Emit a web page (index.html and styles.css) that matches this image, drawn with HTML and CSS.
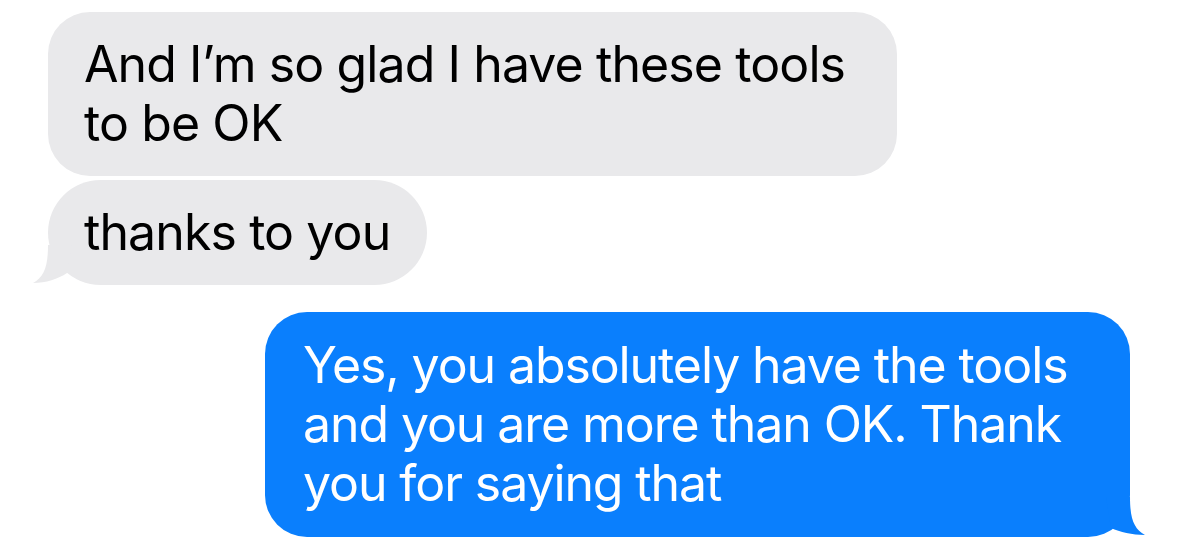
FILE: index.html
```html
<!DOCTYPE html>
<html lang="en">
<head>
  <meta charset="UTF-8" />
  <meta name="viewport" content="width=device-width, initial-scale=1.0"/>
  <title>Messages</title>
  <link rel="stylesheet" href="styles.css">
</head>
<body>
  <div class="thread">
    <div class="bubble received first">
      And I’m so glad I have these tools<br>to be OK
    </div>

    <div class="bubble received last">
      thanks to you
      <svg class="tail tail-left" width="56" height="40" viewBox="0 0 56 40">
        <path d="M16 0 C16 22 12 32 1 38 C14 38 26 34 35 28 L40 0 Z" fill="#e9e9eb"/>
      </svg>
    </div>

    <div class="bubble sent last">
      Yes, you absolutely have the tools<br>and you are more than OK. Thank<br>you for saying that
      <svg class="tail tail-right" width="56" height="40" viewBox="0 0 56 40">
        <path d="M40 0 C40 22 44 32 55 38 C42 38 30 35 21 31 L16 0 Z" fill="#0a7ffd"/>
      </svg>
    </div>
  </div>
</body>
</html>
```

FILE: styles.css
```css
body {
  margin: 0;
  padding: 0;
  background: #ffffff;
  font-family: Inter, 'Noto Sans', sans-serif;
}

.thread {
  display: flex;
  flex-direction: column;
  align-items: flex-start;
  padding: 12px 49px 0 48px;
}

.bubble {
  position: relative;
  box-sizing: border-box;
  font-size: 50px;
  line-height: 59px;
  letter-spacing: -0.9px;
  padding: 23px 36px;
  border-radius: 42px;
  white-space: nowrap;
}

.received {
  background: #e9e9eb;
  color: #000000;
}

.received.first {
  width: 849px;
}

.received.last {
  margin-top: 4px;
  width: 379px;
  border-radius: 53px;
}

.sent {
  align-self: flex-end;
  margin-top: 27px;
  width: 865px;
  padding: 24px 38px;
  letter-spacing: -1.1px;
  background: #0a7ffd;
  color: #ffffff;
}

.tail {
  position: absolute;
  bottom: 0;
}

.tail-left {
  left: -16px;
}

.tail-right {
  right: -16px;
}
```
